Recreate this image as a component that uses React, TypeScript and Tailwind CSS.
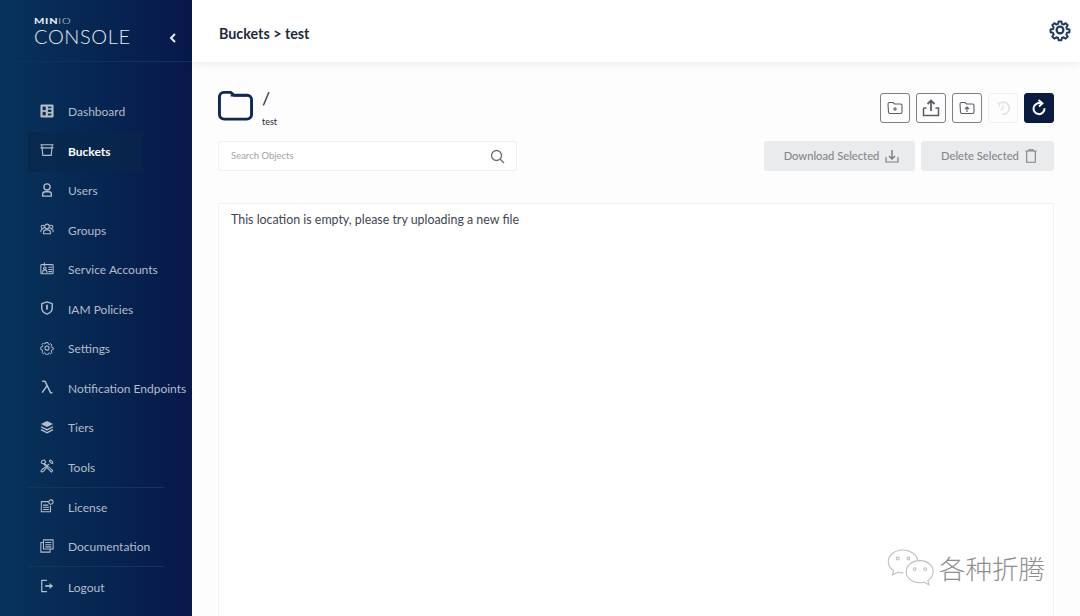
import React from "react";

const S = ({ children, size = 16, sw = 1.5, className = "" }: { children: React.ReactNode; size?: number; sw?: number; className?: string }) => (
  <svg width={size} height={size} viewBox="0 0 16 16" fill="none" stroke="currentColor" strokeWidth={sw} strokeLinecap="round" strokeLinejoin="round" className={className}>
    {children}
  </svg>
);

const icons: Record<string, React.ReactNode> = {
  dashboard: (
    <S size={14}>
      <rect x="0.5" y="0.5" width="15" height="15" rx="1.5" fill="currentColor" stroke="none" />
      <rect x="3" y="3" width="3.5" height="4" fill="#0a2a4e" stroke="none" />
      <rect x="9" y="3" width="4" height="1.800" fill="#0a2a4e" stroke="none" />
      <rect x="9" y="6.500" width="4" height="2.500" fill="#0a2a4e" stroke="none" />
      <rect x="3" y="9" width="3.500" height="4" fill="#0a2a4e" stroke="none" />
      <rect x="9" y="11" width="4" height="2" fill="#0a2a4e" stroke="none" />
    </S>
  ),
  buckets: (
    <S size={14} sw={1.3}>
      <path d="M1 2h14M1 5.500h14M2 2l1.200 12.200h9.600L14 2" />
    </S>
  ),
  users: (
    <S size={14} sw={1.500}>
      <circle cx="8" cy="4.500" r="3.500" />
      <path d="M3 15v-2a3 3 0 0 1 3-3h4a3 3 0 0 1 3 3v2z" />
    </S>
  ),
  groups: (
    <S size={14} sw={1.200}>
      <circle cx="8" cy="5" r="2.600" />
      <circle cx="3.200" cy="5.500" r="1.900" />
      <circle cx="12.800" cy="5.500" r="1.900" />
      <path d="M4 13.500v-1.500a3 3 0 0 1 3-3h2a3 3 0 0 1 3 3v1.500zM1 11V10a2 2 0 0 1 2-2M15 11V10a2 2 0 0 0-2-2" />
    </S>
  ),
  service: (
    <S size={14} sw={1.200}>
      <rect x="1" y="3" width="14" height="10.500" rx="1" />
      <path d="M5 1v3M3 12c0-2 1-3 2.500-3S8 10 8 12M10 6h3.500M10 8.500h3.500M10 11h3.500" />
      <circle cx="5.500" cy="7" r="1.400" />
    </S>
  ),
  iam: (
    <S size={14} sw={1.600}>
      <path d="M8 1l6 2v5c0 3.400-2.600 5.800-6 7-3.400-1.200-6-3.600-6-7V3z" />
      <path d="M8 5v4" strokeWidth="2" />
    </S>
  ),
  settings: (
    <S size={14} sw={1.200}>
      <circle cx="8" cy="8" r="2.400" />
      <path d="M6.800 1h2.400l.4 2 1.400.6 1.700-1.100 1.700 1.700-1.100 1.700.6 1.400 2 .4v2.400l-2 .4-.6 1.400 1.100 1.700-1.700 1.700-1.700-1.100-1.400.6-.4 2H6.800l-.4-2-1.400-.6-1.700 1.100-1.700-1.700 1.100-1.700-.6-1.400-2-.4V6.800l2-.4.6-1.400-1.100-1.700 1.700-1.700 1.700 1.100 1.400-.6z" transform="translate(0.800 0.800) scale(0.900)" />
    </S>
  ),
  lambda: (
    <S size={14} sw={1.700}>
      <path d="M2.500 1.500h2.200c.8 0 1.300.4 1.700 1.200L12 14.500h2.200M8 6.500L2.500 14.500" strokeLinecap="butt" />
    </S>
  ),
  tiers: (
    <S size={14}>
      <path d="M8 1L15 4.500 8 8 1 4.500z" fill="currentColor" stroke="none" />
      <path d="M1.500 7.200L8 10.400l6.500-3.200 .8 1.200L8 12.200.7 8.400zM1.500 10.400L8 13.600l6.500-3.200 .8 1.200L8 15.400.7 11.600z" fill="currentColor" stroke="none" />
    </S>
  ),
  tools: (
    <S size={14} sw={1.200}>
      <path d="M2 2l3-1 1.500 2.500L5 5l9.500 8-1.500 2L4 5.500 1.500 4.500zM11 1.500a3 3 0 0 1 3.500 3.500l-2-.5-1.500-1.500zM10 6L2.500 12 1 14l1.500 1 2-1.500L7.500 10" />
    </S>
  ),
  license: (
    <S size={14} sw={1.200}>
      <path d="M9.500 3H1.500v11.500h10.500V8" />
      <path d="M4 7h5M4 9.500h6M4 12h6" />
      <circle cx="12.500" cy="3.500" r="2.500" />
    </S>
  ),
  docs: (
    <S size={14} sw={1.200}>
      <path d="M4 1h11v10.500H4zM6.500 4h6M6.500 6.500h6M6.500 9h6" />
      <path d="M4 4H1v11h10.500v-3.500" />
    </S>
  ),
  logout: (
    <S size={14} sw={1.400}>
      <path d="M8 1.500H2v13h6" strokeLinecap="butt" />
      <path d="M6 8h5.500" strokeWidth="2" strokeLinecap="butt" />
      <path d="M11 4.500L15 8l-4 3.500z" fill="currentColor" stroke="none" />
    </S>
  ),
};

const Item = ({ icon, label, active }: { icon: string; label: string; active?: boolean }) => (
  <div className={`flex h-[39.5px] items-center pl-[12px] ${active ? "bg-[#0a2747]/60 text-white font-bold" : "text-[#b4bdc9]"}`}>
    <span className={`flex w-[28px] shrink-0 -mt-[3px] ${active ? "text-[#b4bdc9]" : ""}`}>{icons[icon]}</span>
    <span className="whitespace-nowrap text-[12px]">{label}</span>
  </div>
);

const IconBtn = ({ children, className = "" }: { children: React.ReactNode; className?: string }) => (
  <div className={`flex h-[30px] w-[30px] items-center justify-center rounded-[3px] border ${className}`}>{children}</div>
);

export default function App() {
  return (
    <div className="flex h-[616px] w-[1080px] overflow-hidden bg-[#fdfdfd] font-['Lato','Liberation_Sans',sans-serif]">
      <aside className="flex h-full w-[192px] shrink-0 flex-col bg-gradient-to-r from-[#07335a] to-[#07184a]">
        <div className="flex h-[62px] items-start justify-between border-b border-[#0f3358] pl-[34px] pr-[15px]">
          <div className="mt-[18px] flex flex-col text-[#e6eaef]">
            <div className="flex h-[7px] origin-left scale-x-[1.55] items-center text-[7px] leading-none tracking-[0.5px]"><b className="font-black">MIN</b><span className="font-light">IO</span></div>
            <div className="mt-[1px] text-[20px] leading-[20px] tracking-[0.6px] font-light">CONSOLE</div>
          </div>
          <svg width="8" height="10" viewBox="0 0 8 10" fill="none" stroke="#e6eaef" strokeWidth="2" className="mt-[33px]"><path d="M6 1L2 5l4 4" /></svg>
        </div>
        <nav className="mt-[30.5px] ml-[28px] flex w-[136px] flex-col">
          <Item icon="dashboard" label="Dashboard" />
          <div className="w-[114px]"><Item icon="buckets" label="Buckets" active /></div>
          <Item icon="users" label="Users" />
          <Item icon="groups" label="Groups" />
          <Item icon="service" label="Service Accounts" />
          <Item icon="iam" label="IAM Policies" />
          <Item icon="settings" label="Settings" />
          <Item icon="lambda" label="Notification Endpoints" />
          <Item icon="tiers" label="Tiers" />
          <Item icon="tools" label="Tools" />
          <div className="-mt-px mb-[0.5px] h-px bg-[#123558]" />
          <Item icon="license" label="License" />
          <Item icon="docs" label="Documentation" />
          <div className="-mt-px mb-px h-px bg-[#123558]" />
          <Item icon="logout" label="Logout" />
        </nav>
      </aside>

      <main className="relative flex min-w-0 flex-1 flex-col">
        <header className="flex h-[62px] items-start justify-between bg-white pl-[27px] pr-[8px] shadow-[0_2px_8px_rgba(0,0,0,0.07)]">
          <div className="mt-[24px] text-[14.3px] font-bold leading-[20px] text-[#1f2a3a]">Buckets &gt; test</div>
          <svg width="24" height="24" viewBox="0 0 24 24" fill="none" stroke="#1f3a63" strokeWidth="2.200" strokeLinejoin="round" className="mt-[18px]">
            <circle cx="12" cy="12" r="3.400" />
            <path d="M10.400 2.500h3.200l.5 2.700 1.900.8 2.300-1.600 2.300 2.300-1.600 2.300.8 1.900 2.700.5v3.200l-2.700.5-.8 1.900 1.600 2.300-2.300 2.300-2.300-1.600-1.900.8-.5 2.700h-3.200l-.5-2.700-1.900-.8-2.300 1.600-2.300-2.300 1.600-2.300-.8-1.900-2.700-.5v-3.200l2.700-.5.8-1.900-1.600-2.300 2.300-2.300 2.300 1.600 1.900-.8z" transform="translate(1.200 1.200) scale(0.900)" />
          </svg>
        </header>

        <div className="flex flex-1 flex-col pl-[26px] pr-[26px]">
          <div className="mt-[28px] flex h-[51px] items-start justify-between">
            <div className="flex items-start">
              <svg width="35" height="33" viewBox="0 0 36 33" fill="none" stroke="#0f2a52" strokeWidth="3" strokeLinejoin="round" className="-mt-[1px]">
                <path d="M1.500 8c0-3 2-5 4.500-5h7l3.500 3h13.500c2.500 0 4.500 2 4.500 4.500v15c0 3-2 5-5 5h-23c-3 0-5-2-5-5z" />
                <path d="M13 6.500h18" strokeWidth="1.500" />
              </svg>
              <div className="ml-[9px] flex flex-col text-[#1f2a3a]">
                <span className="-mt-[1px] text-[18px] leading-[18px]">/</span>
                <span className="mt-[9px] text-[9px] leading-[12px]">test</span>
              </div>
            </div>
            <div className="mt-[3px] flex gap-[6px] text-[#5a5f66]">
              <IconBtn className="border-[#7f7f7f]">
                <svg width="16" height="14" viewBox="0 0 16 14" fill="none" stroke="currentColor" strokeWidth="1.100"><path d="M1 3c0-1 .5-1.500 1.500-1.500h3.500l1.500 1.500h6c1 0 1.500.5 1.500 1.500v6.500c0 1-.5 1.500-1.500 1.500h-10.500c-1 0-1.500-.5-1.500-1.500z" /><path d="M8 6v4M6 8h4" /></svg>
              </IconBtn>
              <IconBtn className="border-[#7f7f7f]">
                <svg width="18" height="18" viewBox="0 0 18 18" fill="none" stroke="currentColor" strokeWidth="1.800"><path d="M9 12V2M5.500 5L9 1.500 12.500 5" /><path d="M1.500 9v7.500h15V9h-3" strokeWidth="1.500" /><path d="M1.500 9h3" strokeWidth="1.500" /></svg>
              </IconBtn>
              <IconBtn className="border-[#7f7f7f]">
                <svg width="16" height="14" viewBox="0 0 16 14" fill="none" stroke="currentColor" strokeWidth="1.100"><path d="M1 3c0-1 .5-1.500 1.500-1.500h3.500l1.500 1.500h6c1 0 1.500.5 1.500 1.500v6.500c0 1-.5 1.500-1.500 1.500h-10.500c-1 0-1.500-.5-1.500-1.500z" /><path d="M8 11V6M6 8l2-2 2 2" /></svg>
              </IconBtn>
              <IconBtn className="border-[#f0f0f0] text-[#e2e2e2]">
                <svg width="16" height="16" viewBox="0 0 16 16" fill="none" stroke="currentColor" strokeWidth="1.600"><path d="M4.500 3.500A6 6 0 1 1 7 14" /><path d="M8 5v3.500L5.500 10" strokeWidth="1.200" /><path d="M2 2.500l3 .8-.8 3" strokeWidth="1.200" /></svg>
              </IconBtn>
              <IconBtn className="border-[#081c42] bg-[#081c42] text-white">
                <svg width="16" height="18" viewBox="0 0 16 18" fill="none" stroke="currentColor" strokeWidth="2"><path d="M10 4.500a5.500 5.500 0 1 0 3.500 4.800" /><path d="M7.500 1L11.500 4.300 8 7.500" strokeWidth="1.800" /></svg>
              </IconBtn>
            </div>
          </div>

          <div className="flex items-start justify-between">
            <div className="flex h-[30px] w-[299px] items-center justify-between rounded-[3px] border border-[#f0f0f0] bg-white pl-[12px] pr-[11px]">
              <span className="text-[9.500px] text-[#a3a3a3]">Search Objects</span>
              <svg width="15" height="15" viewBox="0 0 15 15" fill="none" stroke="#6d6f72" strokeWidth="1.300"><circle cx="6.500" cy="6.500" r="5" /><path d="M10.200 10.200L14 14" /></svg>
            </div>
            <div className="flex gap-[6px]">
              <div className="flex h-[30px] w-[151px] items-center justify-center gap-[6px] rounded-[3px] bg-[#e9ebec] pl-[4px] text-[11.200px] text-[#85888b]">
                <span className="font-medium">Download Selected</span>
                <svg width="14" height="14" viewBox="0 0 14 14" fill="none" stroke="#7d8083" strokeWidth="1.200"><path d="M7 1v8.500M4 7l3 3 3-3" strokeWidth="1.500" /><path d="M1 8v5h12V8" /></svg>
              </div>
              <div className="flex h-[30px] w-[133px] items-center justify-center gap-[6px] rounded-[3px] bg-[#e9ebec] pl-[3px] text-[11.200px] text-[#85888b]">
                <span className="font-medium">Delete Selected</span>
                <svg width="12" height="14" viewBox="0 0 12 14" fill="none" stroke="#7d8083" strokeWidth="1.100"><path d="M.5 2h11M4 2V.7h4V2M1.700 2v11.300h8.600V2" /></svg>
              </div>
            </div>
          </div>

          <section className="mt-[32px] flex-1 rounded-t-[3px] border border-b-0 border-[#f0f0f0] bg-white px-[12px] pt-[7px]">
            <p className="text-[12.400px] leading-[17px] text-[#3f4650]">This location is empty, please try uploading a new file</p>
          </section>
        </div>

        <div className="absolute left-[695px] top-[549px] flex items-center gap-[3px]">
          <svg width="49" height="38" viewBox="0 0 46 36" fill="none" stroke="#bdbdbd" strokeWidth="1">
            <path d="M15 1C7 1 1 6 1 12c0 3.500 2 6.500 5 8.500l-1 4 5-2.500c1.500.4 3 .6 5 .6" fill="#ffffff" />
            <path d="M15 1c7 0 13 4 14 10" />
            <circle cx="10" cy="9" r="1.300" /><circle cx="20" cy="9" r="1.300" />
            <path d="M31 11c-7.500 0-13 4.500-13 10.500S23.500 32 31 32c1.500 0 3-.2 4-.6l4.500 2.600-1-4c3-2 5-5 5-8.500C43.500 15.500 38 11 31 11z" fill="#ffffff" />
            <circle cx="26" cy="19" r="1.300" /><circle cx="36" cy="19" r="1.300" />
          </svg>
          <span className="font-['Noto_Sans_CJK_SC',sans-serif] text-[26.500px] font-light leading-[30px] text-[#8f8f8f]">各种折腾</span>
        </div>
      </main>
    </div>
  );
}
